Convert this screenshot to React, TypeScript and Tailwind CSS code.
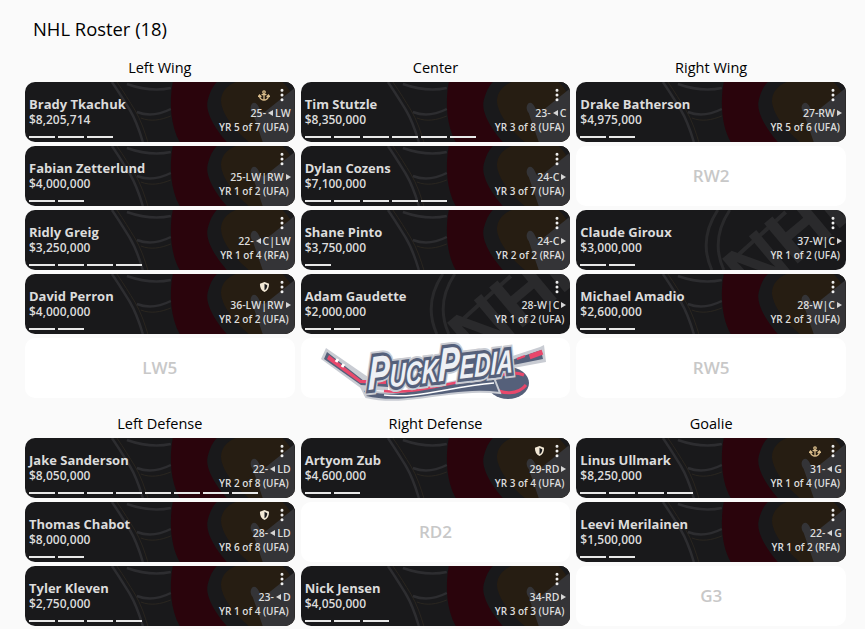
import { EllipsisVertical } from "lucide-react";

type Player = {
  name: string;
  salary: string;
  age: string;
  pos: string;
  contract: string;
  bars: number;
  art?: "sens" | "nhl";
  badge?: "anchor" | "shield";
};

const SensArt = () => (
  <svg className="absolute inset-0 h-full w-full" viewBox="0 0 270 60" preserveAspectRatio="none" aria-hidden="true">
    <path d="M148 0C144 20 146 45 155 60H202C190 46 180 30 183 18C185 10 188 4 192 0Z" fill="#2a040c" />
    <path d="M211 0C200 4 194 14 197 24C200 36 212 50 224 60H270V0Z" fill="#261d12" />
    <path d="M258 0C266 8 268 14 270 18V0Z" fill="#19191b" />
    <path d="M228 31C223 25 228 18 232 22C236 26 234 30 240 30L270 6V60H238Z" fill="#343437" />
    <path d="M87 0C94 10 100 20 105 28C111 38 115 50 118 60" fill="none" stroke="#2d2d30" strokeWidth="2.5" />
    <path d="M92 0C99 10 105 20 110 28C116 38 120 50 123 60" fill="none" stroke="#2a2620" strokeWidth="1" />
    <path d="M102 2C116 7 132 9 146 6" fill="none" stroke="#2d2d30" strokeWidth="2.5" />
    <path d="M112 30C122 34 134 33 146 27" fill="none" stroke="#2d2d30" strokeWidth="2.5" />
    <path d="M116 36C126 40 136 38 146 34" fill="none" stroke="#2a2620" strokeWidth="1" />
  </svg>
);

const NhlArt = () => (
  <svg className="absolute inset-0 h-full w-full" viewBox="0 0 270 60" preserveAspectRatio="none" aria-hidden="true">
    <path d="M142 0C130 18 126 38 136 60M154 0C142 18 138 38 148 60" fill="none" stroke="#29292b" strokeWidth="3" />
    <path d="M159 48L210 2" fill="none" stroke="#29292b" strokeWidth="4" />
    <text
      x="0"
      y="0"
      transform="translate(176 92) rotate(-40)"
      fontFamily="'Liberation Sans', sans-serif"
      fontWeight="700"
      fontSize="76"
      fill="#2a2a2c"
    >
      NHL
    </text>
  </svg>
);

const Anchor = () => (
  <svg width="12" height="13" viewBox="0 0 24 24" fill="none" stroke="#dcbf8c" strokeWidth="2.5" strokeLinecap="round">
    <circle cx="12" cy="5" r="2.5" />
    <path d="M12 8V21M3 13C3 18 8 21 12 21C16 21 21 18 21 13M1 14L3 11L6 14M18 14L21 11L23 14M8 10H16" />
  </svg>
);

const Shield = () => (
  <svg width="11" height="12" viewBox="0 0 24 24">
    <path d="M12 1L22 5C22 14 19 20 12 23C5 20 2 14 2 5Z" fill="#f2e8d5" />
    <path d="M12 5V19C16 17 18 13 18 8Z" fill="#1a1a1c" />
  </svg>
);

const Tri = ({ dir }: { dir: "l" | "r" }) => (
  <span
    className={`inline-block h-0 w-0 border-y-[3.5px] border-y-transparent ${
      dir === "l" ? "mx-[2px] border-r-[5px] border-r-[#d5d5d5]" : "ml-[2px] border-l-[5px] border-l-[#d5d5d5]"
    }`}
  />
);

// "<" and ">" in pos mark where the little arrow goes
const PosLine = ({ age, pos }: { age: string; pos: string }) => {
  const left = pos.startsWith("<");
  const right = pos.endsWith(">");
  const label = pos.replace("<", "").replace(">", "");
  return (
    <div className="-mr-[2px] flex items-center justify-end text-[10.5px] leading-[14px] font-semibold whitespace-nowrap">
      <span>{age}-</span>
      {left && <Tri dir="l" />}
      <span>{label}</span>
      {right && <Tri dir="r" />}
    </div>
  );
};

const PlayerCard = ({ p }: { p: Player }) => (
  <div className="relative h-[60px] overflow-hidden rounded-[10px] bg-[#19191b] text-[#dcdcdc]">
    {p.art === "nhl" ? <NhlArt /> : <SensArt />}
    <div className="relative flex h-full justify-between pl-1 pr-[6px]">
      <div className="flex w-0 flex-1 flex-col pt-[14px]">
        <div className="text-[13px] leading-[16px] font-bold whitespace-nowrap">{p.name}</div>
        <div className="text-[12px] leading-[16px] font-semibold">{p.salary}</div>
        <div className="mt-auto mb-[4px] flex gap-[3px]">
          {Array.from({ length: p.bars }).map((_, i) => (
            <span key={i} className="h-0.5 w-[26px] shrink-0 bg-[#e8e8e8]" />
          ))}
        </div>
      </div>
      <div className="flex shrink-0 flex-col items-end pt-[4px]">
        <div className="flex h-[18px] items-center gap-[4px]">
          {p.badge === "anchor" && <Anchor />}
          {p.badge === "shield" && <Shield />}
          <EllipsisVertical size={16} strokeWidth={2.5} color="#f0f0f0" className="mr-[-1px]" />
        </div>
        <div className="mt-[2px] self-stretch">
          <PosLine age={p.age} pos={p.pos} />
        </div>
        <div className="text-[10px] leading-[14px] font-semibold whitespace-nowrap">{p.contract}</div>
      </div>
    </div>
  </div>
);

const EmptySlot = ({ label }: { label: string }) => (
  <div className="flex h-[60px] items-center justify-center rounded-[10px] bg-white text-[17px] font-semibold text-[#c8c8c8]">
    {label}
  </div>
);

const LogoSlot = () => (
  <div className="flex h-[60px] items-center justify-center rounded-[10px] bg-white">
    <svg width="235" height="60" viewBox="0 3 235 60" className="overflow-visible">
      {/* stick, left blade */}
      <path d="M3 24L8 13L50 42L70 40L70 56L44 54Z" fill="#c9ccd3" />
      <path d="M6 24L9 17L46 46L70 44L70 52L43 50Z" fill="#55607a" />
      <path d="M9 24L11 20L43 45L68 45L68 49L42 48Z" fill="#e8486b" />
      <path d="M18 27L20 24M24 32L26 29" stroke="#fff" strokeWidth="3" />
      {/* stick, right end */}
      <path d="M185 24L222 12L226 10L228 27L190 34Z" fill="#c9ccd3" />
      <path d="M188 27L223 15L225 24L190 31Z" fill="#55607a" />
      <path d="M199 24L207 21M212 20L223 16L224 19L213 23Z" stroke="#e8486b" strokeWidth="2" fill="#e8486b" />
      {/* puck */}
      <ellipse cx="190" cy="48" rx="21" ry="16" fill="#55607a" />
      <path d="M174 46C182 38 196 36 206 40M174 52C184 60 200 60 208 50" fill="none" stroke="#e8486b" strokeWidth="3" />
      {/* swoosh */}
      <path d="M44 54C80 66 120 46 175 40L182 58C130 52 90 72 48 62Z" fill="#55607a" stroke="#c9ccd3" strokeWidth="2" />
      <path d="M66 56C100 60 130 46 175 42" fill="none" stroke="#e8486b" strokeWidth="2.5" />
      <path d="M66 60C100 64 130 52 176 48" fill="none" stroke="#fff" strokeWidth="1.5" />
      <g
        transform="translate(50 55) rotate(-7) skewX(-8) scale(1 1.3)"
        fontFamily="'Liberation Sans', sans-serif"
        fontWeight="700"
        fontStyle="italic"
        fontSize="25"
      >
        <text textLength="146" lengthAdjust="spacingAndGlyphs" fill="#c9ccd3" stroke="#c9ccd3" strokeWidth="8" strokeLinejoin="miter" aria-hidden="true">
          <tspan fontSize="36">P</tspan>UCK<tspan fontSize="36">P</tspan>EDIA
        </text>
        <text textLength="146" lengthAdjust="spacingAndGlyphs" fill="#55607a" stroke="#55607a" strokeWidth="5" strokeLinejoin="miter" aria-hidden="true">
          <tspan fontSize="36">P</tspan>UCK<tspan fontSize="36">P</tspan>EDIA
        </text>
        <text textLength="146" lengthAdjust="spacingAndGlyphs" fill="#eef0f4">
          <tspan fontSize="36">P</tspan>UCK<tspan fontSize="36">P</tspan>EDIA
        </text>
      </g>
    </svg>
  </div>
);

type Column = { title: string; slots: (Player | string)[] };

const forwards: Column[] = [
  {
    title: "Left Wing",
    slots: [
      { name: "Brady Tkachuk", salary: "$8,205,714", age: "25", pos: "<LW", contract: "YR 5 of 7 (UFA)", bars: 3, badge: "anchor" },
      { name: "Fabian Zetterlund", salary: "$4,000,000", age: "25", pos: "LW|RW>", contract: "YR 1 of 2 (UFA)", bars: 2 },
      { name: "Ridly Greig", salary: "$3,250,000", age: "22", pos: "<C|LW", contract: "YR 1 of 4 (RFA)", bars: 4 },
      { name: "David Perron", salary: "$4,000,000", age: "36", pos: "LW|RW>", contract: "YR 2 of 2 (UFA)", bars: 2, badge: "shield" },
      "LW5",
    ],
  },
  {
    title: "Center",
    slots: [
      { name: "Tim Stutzle", salary: "$8,350,000", age: "23", pos: "<C", contract: "YR 3 of 8 (UFA)", bars: 6 },
      { name: "Dylan Cozens", salary: "$7,100,000", age: "24", pos: "C>", contract: "YR 3 of 7 (UFA)", bars: 5 },
      { name: "Shane Pinto", salary: "$3,750,000", age: "24", pos: "C>", contract: "YR 2 of 2 (RFA)", bars: 1 },
      { name: "Adam Gaudette", salary: "$2,000,000", age: "28", pos: "W|C>", contract: "YR 1 of 2 (UFA)", bars: 2, art: "nhl" },
      "logo",
    ],
  },
  {
    title: "Right Wing",
    slots: [
      { name: "Drake Batherson", salary: "$4,975,000", age: "27", pos: "RW>", contract: "YR 5 of 6 (UFA)", bars: 2 },
      "RW2",
      { name: "Claude Giroux", salary: "$3,000,000", age: "37", pos: "W|C>", contract: "YR 1 of 2 (UFA)", bars: 2, art: "nhl" },
      { name: "Michael Amadio", salary: "$2,600,000", age: "28", pos: "W|C>", contract: "YR 2 of 3 (UFA)", bars: 2 },
      "RW5",
    ],
  },
];

const backs: Column[] = [
  {
    title: "Left Defense",
    slots: [
      { name: "Jake Sanderson", salary: "$8,050,000", age: "22", pos: "<LD", contract: "YR 2 of 8 (UFA)", bars: 8 },
      { name: "Thomas Chabot", salary: "$8,000,000", age: "28", pos: "<LD", contract: "YR 6 of 8 (UFA)", bars: 2, badge: "shield" },
      { name: "Tyler Kleven", salary: "$2,750,000", age: "23", pos: "<D", contract: "YR 1 of 4 (UFA)", bars: 4 },
    ],
  },
  {
    title: "Right Defense",
    slots: [
      { name: "Artyom Zub", salary: "$4,600,000", age: "29", pos: "RD>", contract: "YR 3 of 4 (UFA)", bars: 2, badge: "shield" },
      "RD2",
      { name: "Nick Jensen", salary: "$4,050,000", age: "34", pos: "RD>", contract: "YR 3 of 3 (UFA)", bars: 3 },
    ],
  },
  {
    title: "Goalie",
    slots: [
      { name: "Linus Ullmark", salary: "$8,250,000", age: "31", pos: "<G", contract: "YR 1 of 4 (UFA)", bars: 4, badge: "anchor" },
      { name: "Leevi Merilainen", salary: "$1,500,000", age: "22", pos: "<G", contract: "YR 1 of 2 (RFA)", bars: 2 },
      "G3",
    ],
  },
];

const Group = ({ cols }: { cols: Column[] }) => (
  <div className="grid grid-cols-3 gap-x-1.5">
    {cols.map((col) => (
      <div key={col.title} className="flex flex-col gap-1">
        <div className="h-5 text-center text-[14.5px] leading-[20px] text-black">{col.title}</div>
        {col.slots.map((s, i) =>
          typeof s !== "string" ? (
            <PlayerCard key={i} p={s} />
          ) : s === "logo" ? (
            <LogoSlot key={i} />
          ) : (
            <EmptySlot key={i} label={s} />
          ),
        )}
      </div>
    ))}
  </div>
);

export default function App() {
  return (
    <div className="h-[629px] overflow-hidden bg-[#fafafa] pl-[25px] pr-[19px] pt-[17px] font-['Open_Sans',sans-serif]">
      <h1 className="mb-[17px] pl-2 text-[18.4px] leading-[24px] text-black">NHL Roster (18)</h1>
      <Group cols={forwards} />
      <div className="mt-4">
        <Group cols={backs} />
      </div>
    </div>
  );
}
